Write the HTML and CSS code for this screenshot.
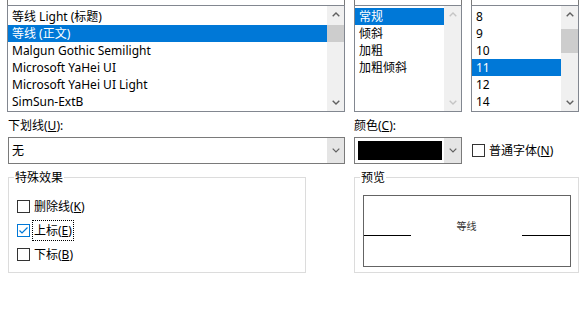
FILE: index.html
```html
<!DOCTYPE html>
<html lang="zh-CN">
<head>
<meta charset="utf-8">
<title>字体</title>
<link rel="stylesheet" href="styles.css">
</head>
<body>
<div class="dialog">
  <div class="pickers">
    <div class="col">
      <div class="stub"></div>
      <div class="list">
        <ul class="items">
          <li>等线 Light (标题)</li>
          <li class="sel">等线 (正文)</li>
          <li>Malgun Gothic Semilight</li>
          <li>Microsoft YaHei UI</li>
          <li>Microsoft YaHei UI Light</li>
          <li>SimSun-ExtB</li>
        </ul>
        <div class="scrollbar">
          <span class="arrow"><svg width="8" height="5" viewBox="0 0 8 5"><path d="M0.7 4.3 L4 1 L7.3 4.3" fill="none" stroke="#606060" stroke-width="1.4"/></svg></span>
          <span class="track"><span class="thumb thumb-font"></span></span>
          <span class="arrow"><svg width="8" height="5" viewBox="0 0 8 5"><path d="M0.7 0.7 L4 4 L7.3 0.7" fill="none" stroke="#606060" stroke-width="1.4"/></svg></span>
        </div>
      </div>
    </div>
    <div class="col">
      <div class="stub"></div>
      <div class="list">
        <ul class="items">
          <li class="sel">常规</li>
          <li>倾斜</li>
          <li>加粗</li>
          <li>加粗倾斜</li>
        </ul>
        <div class="scrollbar">
          <span class="arrow"><svg width="8" height="5" viewBox="0 0 8 5"><path d="M0.7 4.3 L4 1 L7.3 4.3" fill="none" stroke="#c5c5c5" stroke-width="1.4"/></svg></span>
          <span class="track"></span>
          <span class="arrow"><svg width="8" height="5" viewBox="0 0 8 5"><path d="M0.7 0.7 L4 4 L7.3 0.7" fill="none" stroke="#c5c5c5" stroke-width="1.4"/></svg></span>
        </div>
      </div>
    </div>
    <div class="col">
      <div class="stub"></div>
      <div class="list">
        <ul class="items">
          <li>8</li>
          <li>9</li>
          <li>10</li>
          <li class="sel">11</li>
          <li>12</li>
          <li>14</li>
        </ul>
        <div class="scrollbar">
          <span class="arrow"><svg width="8" height="5" viewBox="0 0 8 5"><path d="M0.7 4.3 L4 1 L7.3 4.3" fill="none" stroke="#606060" stroke-width="1.4"/></svg></span>
          <span class="track"><span class="thumb thumb-size"></span></span>
          <span class="arrow"><svg width="8" height="5" viewBox="0 0 8 5"><path d="M0.7 0.7 L4 4 L7.3 0.7" fill="none" stroke="#606060" stroke-width="1.4"/></svg></span>
        </div>
      </div>
    </div>
  </div>

  <div class="field-labels">
    <span>下划线(<u>U</u>):</span>
    <span>颜色(<u>C</u>):</span>
  </div>

  <div class="combos">
    <div class="combo">
      <span class="combo-value">无</span>
      <span class="drop"><svg width="8" height="5" viewBox="0 0 8 5"><path d="M0.7 0.7 L4 4 L7.3 0.7" fill="none" stroke="#606060" stroke-width="1.2"/></svg></span>
    </div>
    <div class="combo">
      <span class="swatch"></span>
      <span class="drop"><svg width="8" height="5" viewBox="0 0 8 5"><path d="M0.7 0.7 L4 4 L7.3 0.7" fill="none" stroke="#606060" stroke-width="1.2"/></svg></span>
    </div>
    <label class="check normal">
      <span class="box"></span>
      <span class="check-text">普通字体(<u>N</u>)</span>
    </label>
  </div>

  <div class="groups">
    <div class="group">
      <span class="group-title">特殊效果</span>
      <div class="effects">
        <div class="effect">
          <span class="box"></span>
          <span class="effect-text">删除线(<u>K</u>)</span>
        </div>
        <div class="effect">
          <span class="box checked"><svg width="11" height="11" viewBox="0 0 11 11"><path d="M1.5 5.5 L4 8 L9.5 2.5" fill="none" stroke="#0078d7" stroke-width="1.2"/></svg></span>
          <span class="effect-text focus">上标(<u>E</u>)</span>
        </div>
        <div class="effect">
          <span class="box"></span>
          <span class="effect-text">下标(<u>B</u>)</span>
        </div>
      </div>
    </div>
    <div class="group">
      <span class="group-title">预览</span>
      <div class="preview">
        <span class="base-line"></span>
        <span class="sample">等线</span>
        <span class="base-line"></span>
      </div>
    </div>
  </div>
</div>
</body>
</html>
```

FILE: styles.css
```css
html, body {
  margin: 0;
  padding: 0;
  background: #fff;
}

.dialog {
  width: 588px;
  height: 318px;
  overflow: hidden;
  box-sizing: border-box;
  padding-left: 7px;
  font-family: "Noto Sans", "Noto Sans CJK SC", sans-serif;
  font-size: 12px;
  line-height: 17px;
  color: #000;
}

u {
  text-decoration: underline;
  text-underline-offset: 1px;
}

/* ---------- top pickers ---------- */
.pickers {
  display: grid;
  grid-template-columns: 338px 108px 108px;
  column-gap: 9px;
}

.stub {
  height: 5px;
  border-left: 1px solid #7a7a7a;
  border-right: 1px solid #7a7a7a;
}

.list {
  height: 107px;
  box-sizing: border-box;
  border: 1px solid #828790;
  display: flex;
}

.items {
  flex: 1;
  min-width: 0;
  list-style: none;
  margin: 0;
  padding: 2px 0 0;
  overflow: hidden;
}

.items li {
  height: 17px;
  line-height: 17px;
  padding-left: 4px;
  white-space: nowrap;
}

.items li.sel {
  background: #0078d7;
  color: #fff;
}

.scrollbar {
  width: 17px;
  background: #f0f0f0;
  display: flex;
  flex-direction: column;
}

.arrow {
  height: 17px;
  display: flex;
  align-items: center;
  justify-content: center;
}

.arrow svg {
  display: block;
}

.track {
  flex: 1;
}

.thumb {
  display: block;
  background: #cdcdcd;
}

.thumb-font {
  margin-top: 2px;
  height: 17px;
}

.thumb-size {
  margin-top: 6px;
  height: 24px;
}

/* ---------- labels + combos ---------- */
.field-labels {
  display: grid;
  grid-template-columns: 338px auto;
  column-gap: 9px;
  margin-top: 5px;
  padding-left: 1px;
}

.field-labels span:last-child {
  margin-left: -1px;
}

.combos {
  display: grid;
  grid-template-columns: 337px 108px auto;
  column-gap: 9px;
  margin-top: 3px;
  margin-left: 1px;
  align-items: center;
}

.combo {
  height: 27px;
  box-sizing: border-box;
  border: 1px solid #7a7a7a;
  display: flex;
  align-items: stretch;
}

.combo-value {
  flex: 1;
  padding-left: 3px;
  line-height: 25px;
}

.swatch {
  width: 84px;
  height: 19px;
  margin: 3px 2px 0 3px;
  background: #000;
}

.drop {
  width: 17px;
  margin-left: auto;
  background: #e5e5e5;
  display: flex;
  align-items: center;
  justify-content: center;
}

.check {
  display: flex;
  align-items: center;
  gap: 4px;
  margin-left: 1px;
}

.box {
  width: 13px;
  height: 13px;
  box-sizing: border-box;
  border: 1px solid #333;
  background: #fff;
  display: flex;
  align-items: center;
  justify-content: center;
  flex: none;
}

.box.checked {
  border-color: #0078d7;
}

/* ---------- groups ---------- */
.groups {
  display: grid;
  grid-template-columns: 298px 225px;
  column-gap: 48px;
  margin-top: 13px;
  margin-left: 1px;
}

.group {
  height: 96px;
  box-sizing: border-box;
  border: 1px solid #dcdcdc;
  display: flex;
  flex-direction: column;
  align-items: flex-start;
}

.group-title {
  margin: -9px 0 0 5px;
  padding: 0 1px;
  background: #fff;
  line-height: 17px;
}

.effects {
  display: flex;
  flex-direction: column;
  padding: 8px 0 0 8px;
}

.effect {
  height: 24px;
  display: flex;
  align-items: center;
}

.effect-text {
  margin-left: 2px;
  padding: 1px 1px;
  border: 1px dotted transparent;
  line-height: 17px;
}

.effect-text.focus {
  border-color: #000;
}

.preview {
  align-self: stretch;
  margin: 9px 7px 0 8px;
  height: 72px;
  box-sizing: border-box;
  border: 1px solid #646464;
  display: grid;
  grid-template-columns: 47px 1fr 48px;
  align-items: start;
}

.base-line {
  margin-top: 39px;
  border-top: 1px solid #000;
}

.sample {
  margin-top: 24px;
  text-align: center;
  font-size: 10px;
  line-height: 12px;
  color: #333;
}
```
